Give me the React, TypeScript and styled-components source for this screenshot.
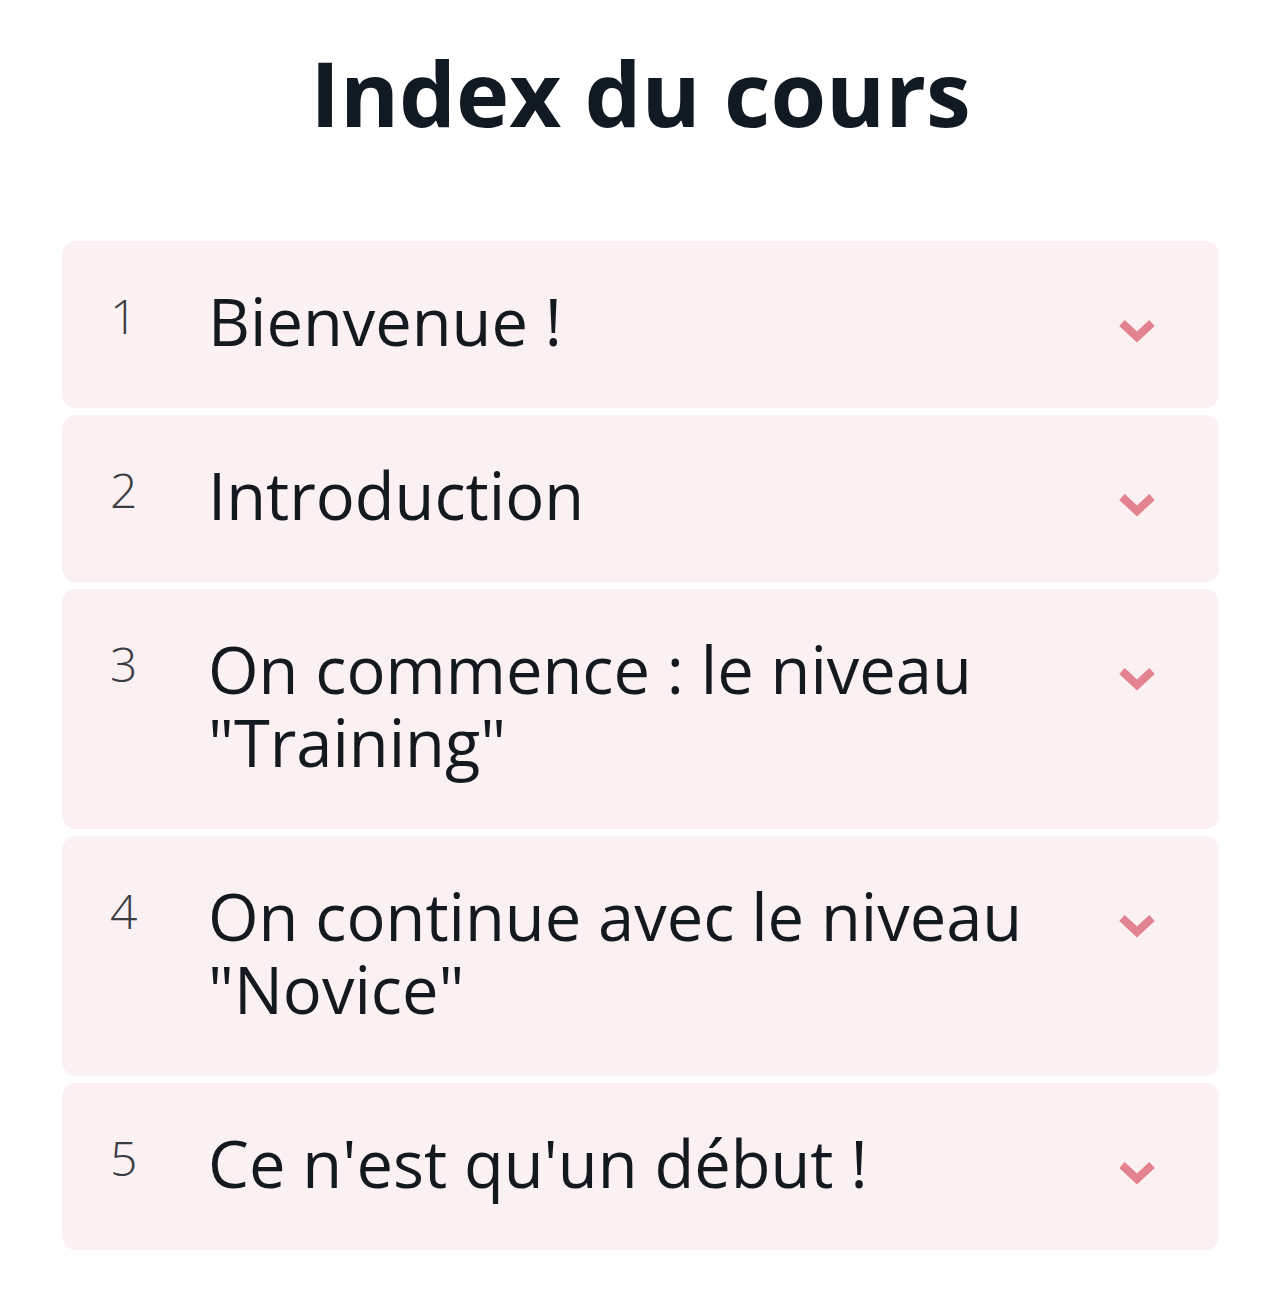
import React from "react";
import styled, { createGlobalStyle } from "styled-components";

const Global = createGlobalStyle`
  html, body { margin: 0; padding: 0; background: #ffffff; }
  body { font-family: "Open Sans", "DejaVu Sans", sans-serif; }
`;

const Page = styled.main`
  padding: 36px 62px 40px 62px;
  display: flex;
  flex-direction: column;
`;

const Title = styled.h1`
  margin: 0 0 93px 0;
  text-align: center;
  font-family: "Open Sans", sans-serif;
  font-weight: 700;
  font-size: 90px;
  line-height: 112px;
  color: #111922;
`;

const List = styled.ol`
  list-style: none;
  margin: 0;
  padding: 0;
  display: flex;
  flex-direction: column;
  gap: 7px;
`;

const Item = styled.li`
  background: #fbf0f2;
  border-radius: 14px;
  padding: 44px 62px 50px 48px;
  display: grid;
  grid-template-columns: 98px 1fr 40px;
  align-items: start;
`;

const Num = styled.span`
  font-family: "Open Sans", sans-serif;
  font-weight: 300;
  font-size: 48px;
  line-height: 60px;
  color: #3b3d44;
  padding-top: 1px;
`;

const Label = styled.span`
  font-family: "Open Sans", sans-serif;
  font-weight: 400;
  font-size: 65px;
  line-height: 73px;
  color: #14181f;
  padding-right: 40px;
`;

const Chevron = styled.svg`
  width: 40px;
  height: 26px;
  margin-top: 33px;
  justify-self: end;
`;

const items = [
  "Bienvenue !",
  "Introduction",
  'On commence : le niveau "Training"',
  'On continue avec le niveau "Novice"',
  "Ce n'est qu'un début !",
];

export default function App() {
  return (
    <>
      <Global />
      <Page>
        <Title>Index du cours</Title>
        <List>
          {items.map((t, i) => (
            <Item key={i}>
              <Num>{i + 1}</Num>
              <Label>{t}</Label>
              <Chevron viewBox="0 0 40 26" aria-hidden>
                <path
                  d="M5 5 L20 19 L35 5"
                  fill="none"
                  stroke="#e3838f"
                  strokeWidth="8"
                  strokeLinecap="butt"
                  strokeLinejoin="miter"
                />
              </Chevron>
            </Item>
          ))}
        </List>
      </Page>
    </>
  );
}
